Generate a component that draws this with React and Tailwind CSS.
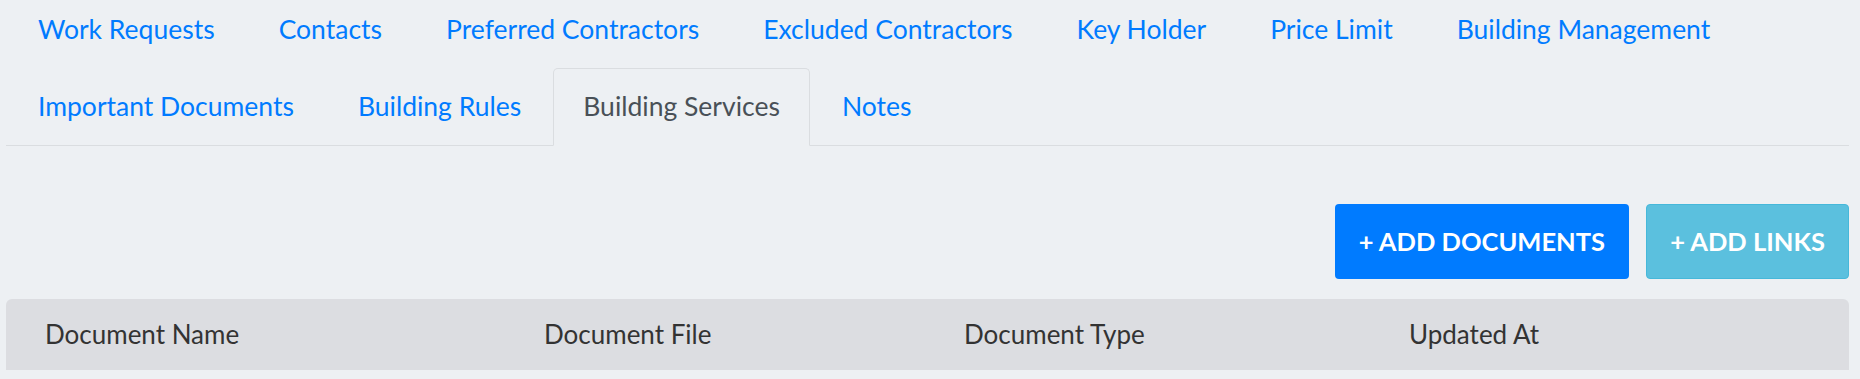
import React from 'react'

const tabs = [
  'Work Requests',
  'Contacts',
  'Preferred Contractors',
  'Excluded Contractors',
  'Key Holder',
  'Price Limit',
  'Building Management',
  'Important Documents',
  'Building Rules',
  'Building Services',
  'Notes',
]

const columns = [
  { label: 'Document Name', w: 'w-[499px]' },
  { label: 'Document File', w: 'w-[420px]' },
  { label: 'Document Type', w: 'w-[445px]' },
  { label: 'Updated At', w: '' },
]

export default function App() {
  const active = 'Building Services'

  return (
    <div className="w-[1860px] h-[379px] overflow-hidden bg-[#edf0f3] font-['Lato','Liberation_Sans',sans-serif]">
      <div className="pl-[6px] pr-[11px] pt-px">
        <ul className="-mt-[10px] flex flex-wrap border-b border-[#dadde0]">
          {tabs.map((t) => (
            <li key={t} className="-mb-px">
              <a
                href="#"
                className={
                  t === active
                    ? 'flex h-[78px] items-center rounded-t-[5px] border border-[#dadde0] border-b-[#edf0f3] bg-[#edf0f3] px-[29px] text-[26.5px] text-[#495057]'
                    : 'flex h-[78px] items-center border border-transparent px-[31px] text-[26.5px] text-[#007bff]'
                }
              >
                {t}
              </a>
            </li>
          ))}
        </ul>

        <div className="mt-[58px] flex justify-end gap-[17px]">
          <button className="h-[75px] rounded-[4px] bg-[#007bff] px-[24px] text-[25.5px] font-bold uppercase text-white">
            + Add Documents
          </button>
          <button className="h-[75px] w-[203px] shrink-0 rounded-[4px] border border-[#46b8da] bg-[#5bc0de] text-[25.5px] font-bold uppercase text-white">
            + Add Links
          </button>
        </div>

        <table className="mt-[20px] w-full border-collapse">
          <thead>
            <tr className="bg-[#dcdde1]">
              {columns.map((c, i) => (
                <th
                  key={c.label}
                  className={`${c.w} h-[71px] pl-[39px] text-left text-[26px] font-normal text-[#333333] ${
                    i === 0 ? 'rounded-tl-[6px]' : ''
                  } ${i === columns.length - 1 ? 'rounded-tr-[6px]' : ''}`}
                >
                  {c.label}
                </th>
              ))}
            </tr>
          </thead>
        </table>
      </div>
    </div>
  )
}
